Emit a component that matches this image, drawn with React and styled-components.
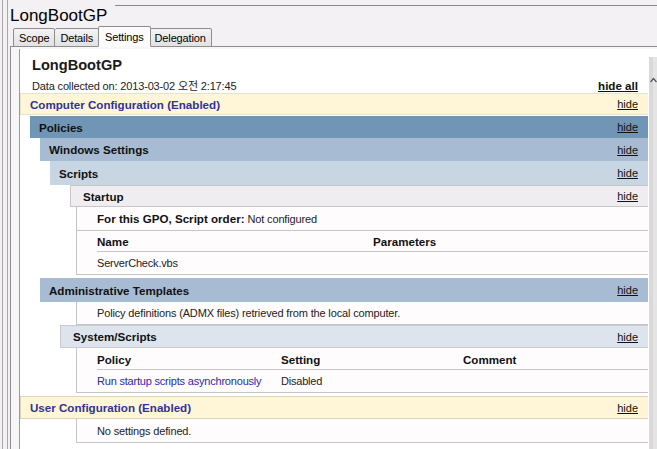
import React from 'react';
import styled, { createGlobalStyle } from 'styled-components';

const Global = createGlobalStyle`
  html, body { margin: 0; padding: 0; }
  body {
    width: 657px; height: 449px; overflow: hidden;
    background: #f4f1f4;
    font-family: "Liberation Sans", Arial, "Noto Sans CJK KR", sans-serif;
    color: #000;
  }
`;

const Window = styled.div`
  width: 657px; height: 449px; display: flex; overflow: hidden;
  background: #f4f1f4;
`;

const Rail = styled.div`
  flex: none; width: 4px; margin: 0 2px 0 2px;
  border-left: 1px solid #a9a9a9; border-right: 1px solid #a9a9a9;
`;

const Main = styled.div`
  flex: 1; min-width: 0; display: flex; flex-direction: column;
`;

const TitleBar = styled.div`
  height: 27px; display: flex; align-items: flex-start;
`;

const WinTitle = styled.div`
  font-size: 17px; line-height: 20px; padding-top: 6px; white-space: nowrap;
`;

const TitleRule = styled.div`
  flex: 1; margin: 5px 0 0 8px; border-top: 1px solid #8a8a8a;
`;

const Tabs = styled.div`
  height: 20px; display: flex; align-items: flex-end; padding-left: 3px;
  position: relative; z-index: 1; margin-bottom: -1px;
`;

const Tab = styled.div`
  height: ${p => (p.$active ? 21 : 19)}px;
  box-sizing: border-box;
  padding: 0 ${p => (p.$active ? 6 : 5)}px;
  margin-left: ${p => (p.$active ? -1 : 0)}px;
  margin-right: ${p => (p.$active ? -1 : 0)}px;
  display: flex; align-items: center;
  font-size: 11px; letter-spacing: -0.15px;
  border: 1px solid #8d8d8d;
  border-bottom: ${p => (p.$active ? '1px solid #fbfbfb' : '1px solid #8d8d8d')};
  border-left-width: ${p => (p.$first || p.$active ? 1 : 0)}px;
  border-radius: 2px 2px 0 0;
  background: ${p => (p.$active ? '#fbfbfb' : 'linear-gradient(#f3f3f3, #e2e2e2)')};
  position: relative; z-index: ${p => (p.$active ? 2 : 1)};
`;

const Panel = styled.div`
  flex: 1; min-height: 0; display: flex;
  border-top: 1px solid #8d8d8d; border-left: 1px solid #8d8d8d;
  background: #f7f7f7;
  padding: 2px 0 0 8px;
`;

const Report = styled.div`
  flex: 1; min-width: 0; display: flex; background: #fff;
  border-left: 1px solid #9a9a9a;
`;

const Content = styled.div`
  flex: 1; min-width: 0; display: flex; flex-direction: column;
`;

const ScrollBar = styled.div`
  flex: none; width: 9px; position: relative;
  background: linear-gradient(to right, #fff 0, #fff 1px, #d9d9d9 1px, #d9d9d9 5px, #e4e4e4 5px);
  margin-top: 8px;
`;

const ScrollArrow = styled.svg`
  position: absolute; left: 2px; top: 20px;
`;

const ReportHead = styled.div`
  padding: 6px 10px 0 12px;
`;

const ReportTitle = styled.div`
  font-size: 14.6px; font-weight: bold; line-height: 20px; color: #1a1a1a;
`;

const MetaRow = styled.div`
  margin-top: 2px; height: 16px; display: flex; align-items: center;
  justify-content: space-between;
  font-size: 11px; letter-spacing: -0.15px; color: #222;
`;

const HideAll = styled.span`
  font-weight: bold; font-size: 11.6px; letter-spacing: 0; text-decoration: underline; color: #111;
`;

const Band = styled.div`
  box-sizing: border-box;
  height: ${p => p.$h}px;
  margin-left: ${p => p.$indent}px;
  margin-top: ${p => p.$gap || 0}px;
  padding: 0 10px 0 ${p => p.$pad}px;
  display: flex; align-items: center; justify-content: space-between;
  background: ${p => p.$bg};
  border: ${p => (p.$border ? `1px solid ${p.$border}` : 'none')};
  border-right: none;
  font-size: 11.6px; font-weight: bold;
  color: ${p => p.$color || '#111'};
`;

const Hide = styled.span`
  font-size: 11px; font-weight: normal; text-decoration: underline; color: #111;
`;

const Box = styled.div`
  box-sizing: border-box;
  margin-left: 56px;
  border: 1px solid #c8c5c8; border-top: none; border-right: none;
  background: #fffcfe;
  padding-left: 20px;
`;

const Line = styled.div`
  box-sizing: border-box; height: ${p => p.$h}px;
  display: flex; align-items: center;
  font-size: 11px; letter-spacing: -0.15px; color: #222;
`;

const Strong = styled.b`
  font-size: 11.6px; letter-spacing: 0; color: #111; margin-right: 3px;
`;

const Grid = styled.div`
  display: grid; grid-template-columns: ${p => p.$cols};
`;

const HeadCell = styled.div`
  box-sizing: border-box; height: ${p => p.$h || 21}px; display: flex; align-items: center;
  padding-top: 1px;
  font-size: 11.6px; font-weight: bold; color: #111;
  border-bottom: 1px solid #c8c5c8;
`;

const Cell = styled.div`
  height: ${p => p.$h || 22}px; display: flex; align-items: center;
  font-size: 11px; letter-spacing: -0.2px;
  color: ${p => (p.$link ? '#2828b4' : '#222')};
`;

const Rule = styled.div`
  margin-left: -20px; border-bottom: 1px solid #c8c5c8;
`;

const YELLOW = '#fef6d7';

export default function App() {
  return (
    <Window>
      <Global />
      <Rail />
      <Main>
        <TitleBar>
          <WinTitle>LongBootGP</WinTitle>
          <TitleRule />
        </TitleBar>
        <Tabs>
          <Tab $first>Scope</Tab>
          <Tab>Details</Tab>
          <Tab $active>Settings</Tab>
          <Tab>Delegation</Tab>
        </Tabs>
        <Panel>
          <Report>
            <Content>
              <ReportHead>
                <ReportTitle>LongBootGP</ReportTitle>
                <MetaRow>
                  <span>Data collected on: 2013-03-02 오전 2:17:45</span>
                  <HideAll>hide all</HideAll>
                </MetaRow>
              </ReportHead>

              <Band $h={22} $indent={0} $pad={9} $bg={YELLOW} $color="#31319c" $border="#e8e2cc">
                Computer Configuration (Enabled)<Hide>hide</Hide>
              </Band>
              <Band $h={22} $gap={1} $indent={10} $pad={9} $bg="#7095b5">
                Policies<Hide>hide</Hide>
              </Band>
              <Band $h={23} $indent={20} $pad={9} $bg="#a7bcd2">
                Windows Settings<Hide>hide</Hide>
              </Band>
              <Band $h={24} $indent={30} $pad={9} $bg="#c8d5e2">
                Scripts<Hide>hide</Hide>
              </Band>
              <Band $h={22} $indent={50} $pad={12} $bg="#efedf0" $border="#c9c6c9">
                Startup<Hide>hide</Hide>
              </Band>
              <Box>
                <Line $h={23}>
                  <Strong>For this GPO, Script order:</Strong> Not configured
                </Line>
                <Rule />
                <Grid $cols="276px 1fr">
                  <HeadCell>Name</HeadCell>
                  <HeadCell>Parameters</HeadCell>
                  <Cell $h={22}>ServerCheck.vbs</Cell>
                  <Cell $h={22} />
                </Grid>
              </Box>

              <Band $h={24} $gap={3} $indent={20} $pad={9} $bg="#a7bcd2">
                Administrative Templates<Hide>hide</Hide>
              </Band>
              <Box>
                <Line $h={22}>Policy definitions (ADMX files) retrieved from the local computer.</Line>
              </Box>
              <Band $h={23} $indent={40} $pad={12} $bg="#dde4ee" $border="#c9c9d0">
                System/Scripts<Hide>hide</Hide>
              </Band>
              <Box>
                <Grid $cols="184px 182px 1fr">
                  <HeadCell $h={22}>Policy</HeadCell>
                  <HeadCell $h={22}>Setting</HeadCell>
                  <HeadCell $h={22}>Comment</HeadCell>
                  <Cell $link>Run startup scripts asynchronously</Cell>
                  <Cell>Disabled</Cell>
                  <Cell />
                </Grid>
              </Box>

              <Band $h={23} $gap={3} $indent={0} $pad={9} $bg={YELLOW} $color="#31319c" $border="#d9d3c0">
                User Configuration (Enabled)<Hide>hide</Hide>
              </Band>
              <Box>
                <Line $h={23}>No settings defined.</Line>
              </Box>
            </Content>
            <ScrollBar>
              <ScrollArrow width="7" height="6" viewBox="0 0 7 6">
                <path d="M0.5 5 L3.5 1.5 L6.5 5" fill="none" stroke="#555" strokeWidth="1.2" />
              </ScrollArrow>
            </ScrollBar>
          </Report>
        </Panel>
      </Main>
    </Window>
  );
}
